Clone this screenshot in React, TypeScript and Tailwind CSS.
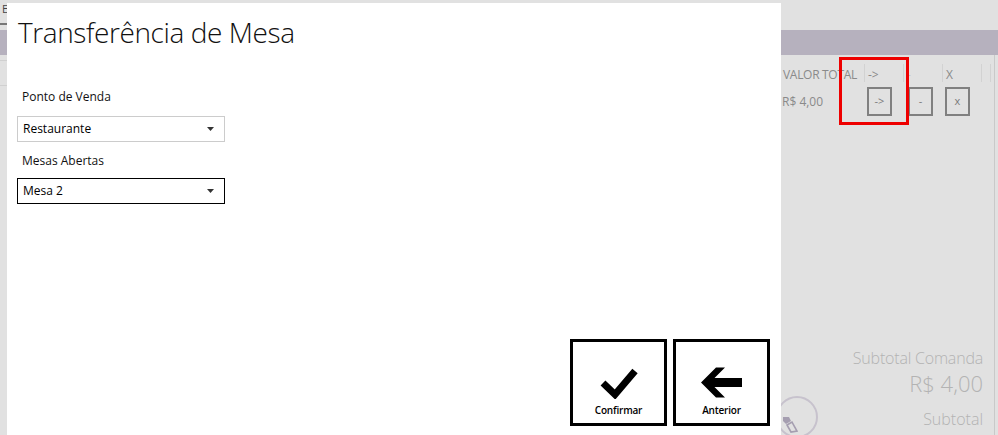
import React from 'react';

function Sep() {
  return <div className="w-px h-[18px] bg-[#d2d2d2]" />;
}

function SmallBox({ label, className }: { label: string; className: string }) {
  return (
    <div className={`w-[25px] h-[29px] border-2 border-[#808080] flex items-center justify-center text-[11px] text-[#7a7a7a] ${className}`}>
      {label}
    </div>
  );
}

function Select({ value, className }: { value: string; className: string }) {
  return (
    <div className={`h-[26px] border flex items-center justify-between pl-[5px] pr-[10px] text-[12px] text-black ${className}`}>
      <span>{value}</span>
      <svg width="7" height="4" viewBox="0 0 7 4">
        <polygon points="0,0 7,0 3.5,4" fill="#333" />
      </svg>
    </div>
  );
}

export default function App() {
  return (
    <div className="relative w-[998px] h-[435px] overflow-hidden bg-[#e1e1e1] font-['Open_Sans',sans-serif]">
      {/* app behind the dialog */}
      <div className="flex flex-col h-full">
        <div className="h-[30px] flex">
          <div className="w-[300px] h-[25px] border-b-2 border-[#777] pl-[2px] pt-[3px] text-[11px] leading-none text-[#444]">E</div>
        </div>
        <div className="h-[25px] bg-[#b6b1be]" />
        <div className="flex flex-1">
          <div className="w-[995px] border-r border-[#c9c9c9] flex flex-col">
            {/* table header */}
            <div className="mt-[5px] h-[26px] flex items-center text-[12px] text-[#8a8a8a]">
              <div className="flex-1 h-full border-y border-[#d0d0d0]" />
              <div className="w-[83px] pl-[2px] pt-[4px] whitespace-nowrap tracking-[-0.3px]">VALOR TOTAL</div>
              <Sep />
              <div className="w-[38px] pl-[3px] pt-[4px]">-&gt;</div>
              <Sep />
              <div className="w-[38px] pl-[3px] pt-[4px] text-[#c4c4c4]">-</div>
              <Sep />
              <div className="w-[38px] pl-[3px] pt-[4px]">X</div>
              <Sep />
              <div className="w-[8px]" />
              <Sep />
              <div className="w-[3px]" />
            </div>
            {/* table row */}
            <div className="h-[30px] flex items-center text-[12px] text-[#8a8a8a]">
              <div className="flex-1" />
              <div className="w-[84px] pl-[2px] pt-[1px] whitespace-nowrap">R$ 4,00</div>
              <div className="w-[39px]"><SmallBox label="->" className="ml-[3px]" /></div>
              <div className="w-[39px]"><SmallBox label="-" className="ml-[5px]" /></div>
              <div className="w-[39px]"><SmallBox label="x" className="ml-[3px]" /></div>
              <div className="w-[13px]" />
            </div>
            {/* totals */}
            <div className="mt-[231px] pr-[11px] flex flex-col items-end font-light text-[#b3b3b3]">
              <div className="text-[16px] leading-[22px] tracking-[-0.2px]">Subtotal Comanda</div>
              <div className="text-[22px] leading-[28px]">R$ 4,00</div>
              <div className="mt-[11px] text-[16px] leading-[22px]">Subtotal</div>
            </div>
          </div>
        </div>
      </div>

      {/* highlight drawn over the screenshot */}
      <div className="absolute left-[839px] top-[57px] w-[70px] h-[68px] border-[3px] border-[#ee0000]" />

      {/* round button partly under the dialog */}
      <div className="absolute left-[776px] top-[396px] w-[42px] h-[42px] rounded-full border-2 border-[#c7c2cd]">
        <svg className="absolute left-[4px] top-[18px]" width="16" height="18" viewBox="0 0 16 18">
          <path d="M1 1 L7 1 L9 5 L4 8 L1 5 Z" fill="#a59eb0" />
          <path d="M5 9 L10 6 L15 15 L9 16 Z" fill="none" stroke="#a59eb0" strokeWidth="1.6" />
        </svg>
      </div>

      {/* dialog */}
      <div className="absolute left-[7px] top-[3px] w-[774px] h-[440px] bg-white flex flex-col">
        <h1 className="mt-[9px] ml-[11px] h-[40px] text-[28px] leading-[40px] font-light tracking-[-0.4px] text-[#111] whitespace-nowrap">
          Transferência de Mesa
        </h1>
        <div className="ml-[10px] w-[208px] flex flex-col">
          <div className="mt-[37px] pl-[5px] text-[12px] leading-[16px] text-[#111]">Ponto de Venda</div>
          <Select value="Restaurante" className="mt-[11px] border-[#cccccc]" />
          <div className="mt-[11px] pl-[5px] text-[12px] leading-[16px] text-[#111]">Mesas Abertas</div>
          <Select value="Mesa 2" className="mt-[9px] border-black" />
        </div>
        <div className="mt-auto mb-[17px] mr-[11px] flex justify-end gap-[6px]">
          <button className="w-[97px] h-[87px] border-[3px] border-black bg-white flex flex-col items-center">
            <svg className="mt-[25px]" width="38" height="32" viewBox="0 0 38 32">
              <polyline points="3,16 15,27.5 35,4" fill="none" stroke="#000" strokeWidth="7" strokeLinejoin="miter" />
            </svg>
            <span className="mt-[4px] text-[10px] leading-[14px] font-semibold tracking-[-0.2px] text-black">Confirmar</span>
          </button>
          <button className="w-[97px] h-[87px] border-[3px] border-black bg-white flex flex-col items-center">
            <svg className="mt-[25px]" width="42" height="32" viewBox="0 0 42 32">
              <polygon points="0,15.5 15,0.5 24,0.5 13.5,11 41,11 41,20 13.5,20 24,30.5 15,30.5" fill="#000" />
            </svg>
            <span className="mt-[4px] text-[10px] leading-[14px] font-semibold tracking-[-0.2px] text-black">Anterior</span>
          </button>
        </div>
      </div>
    </div>
  );
}
